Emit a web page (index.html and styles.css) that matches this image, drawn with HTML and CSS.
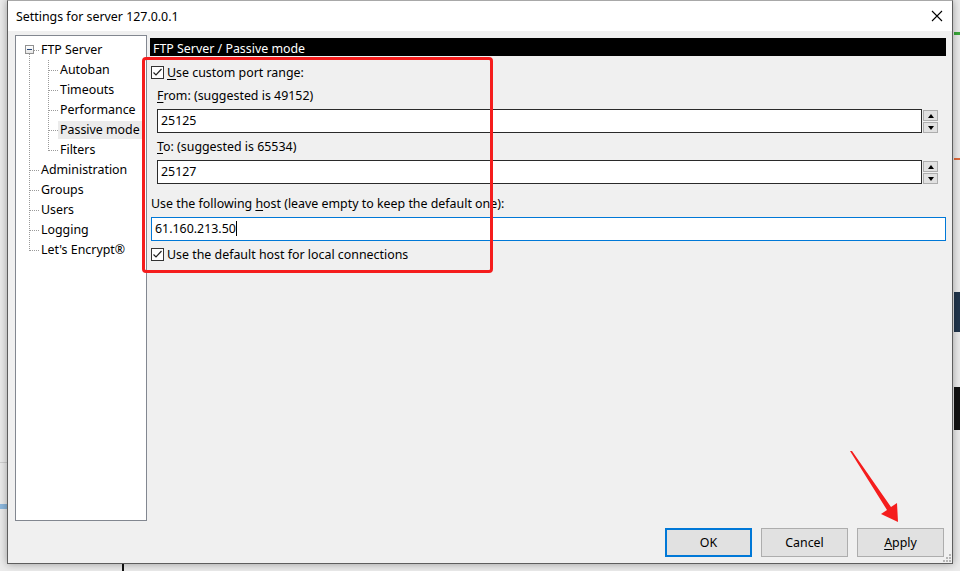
FILE: index.html
```
<!DOCTYPE html>
<html lang="en">
<head>
    <meta charset="UTF-8">
    <title>Settings for server 127.0.0.1</title>
    <link rel="stylesheet" href="styles.css">
</head>
<body>
    <!-- bits of the desktop behind the dialog -->
    <div class="desk">
        <span class="bit bit-line-left"></span>
        <span class="bit bit-blue-left"></span>
        <span class="bit bit-green-right"></span>
        <span class="bit bit-red-right"></span>
        <span class="bit bit-navy-right"></span>
        <span class="bit bit-black-right"></span>
        <span class="bit bit-bottom-line"></span>
    </div>

    <div class="window">
        <div class="titlebar">
            <span class="title">Settings for server 127.0.0.1</span>
            <svg class="close" width="12" height="12" viewBox="0 0 12 12">
                <path d="M1 1 L11 11 M11 1 L1 11" stroke="#000" stroke-width="1.1" fill="none"/>
            </svg>
        </div>

        <div class="content">
            <div class="tree">
                <ul class="tree-root">
                    <li>
                        <div class="tree-row first"><span class="expander"></span><span class="tree-label">FTP Server</span></div>
                        <ul class="tree-kids">
                            <li class="tree-row"><span class="tree-label">Autoban</span></li>
                            <li class="tree-row"><span class="tree-label">Timeouts</span></li>
                            <li class="tree-row"><span class="tree-label">Performance</span></li>
                            <li class="tree-row"><span class="tree-label selected">Passive mode</span></li>
                            <li class="tree-row"><span class="tree-label">Filters</span></li>
                        </ul>
                    </li>
                    <li class="tree-row"><span class="tree-label">Administration</span></li>
                    <li class="tree-row"><span class="tree-label">Groups</span></li>
                    <li class="tree-row"><span class="tree-label">Users</span></li>
                    <li class="tree-row"><span class="tree-label">Logging</span></li>
                    <li class="tree-row"><span class="tree-label">Let's Encrypt®</span></li>
                </ul>
            </div>

            <div class="page">
                <div class="page-title">FTP Server / Passive mode</div>

                <div class="check check-first">
                    <span class="box"><svg width="11" height="11" viewBox="0 0 11 11"><path d="M1.5 5.5 L4 8 L9.5 2" stroke="#222" stroke-width="1.2" fill="none"/></svg></span>
                    <span><u>U</u>se custom port range:</span>
                </div>

                <div class="label indent"><u>F</u>rom: (suggested is 49152)</div>
                <div class="spin-row">
                    <div class="field">25125</div>
                    <div class="spin">
                        <span class="spin-btn"><span class="tri-up"></span></span>
                        <span class="spin-btn"><span class="tri-down"></span></span>
                    </div>
                </div>

                <div class="label indent label-to"><u>T</u>o: (suggested is 65534)</div>
                <div class="spin-row">
                    <div class="field">25127</div>
                    <div class="spin">
                        <span class="spin-btn"><span class="tri-up"></span></span>
                        <span class="spin-btn"><span class="tri-down"></span></span>
                    </div>
                </div>

                <div class="label label-host">Use the following <u>h</u>ost (leave empty to keep the default one):</div>
                <div class="field field-host">61.160.213.50<span class="caret"></span></div>

                <div class="check check-local">
                    <span class="box"><svg width="11" height="11" viewBox="0 0 11 11"><path d="M1.5 5.5 L4 8 L9.5 2" stroke="#222" stroke-width="1.2" fill="none"/></svg></span>
                    <span>Use the default host for local connections</span>
                </div>
            </div>
        </div>

        <div class="footer">
            <button class="btn btn-default">OK</button>
            <button class="btn">Cancel</button>
            <button class="btn"><u>A</u>pply</button>
        </div>

        <svg class="grip" width="8" height="8" viewBox="0 0 8 8">
            <rect x="6" y="0" width="2" height="2" fill="#b5b5b5"/>
            <rect x="3" y="3" width="2" height="2" fill="#b5b5b5"/>
            <rect x="6" y="3" width="2" height="2" fill="#b5b5b5"/>
            <rect x="0" y="6" width="2" height="2" fill="#b5b5b5"/>
            <rect x="3" y="6" width="2" height="2" fill="#b5b5b5"/>
            <rect x="6" y="6" width="2" height="2" fill="#b5b5b5"/>
        </svg>
    </div>

    <!-- red annotations drawn over the screenshot -->
    <div class="callout"></div>
    <svg class="arrow" width="960" height="571" viewBox="0 0 960 571">
        <polygon points="850,451 852,451 891,507 897,503 898,522 881,514 887,510" fill="#f51d1d"/>
    </svg>
</body>
</html>
```

FILE: styles.css
```
* {
    margin: 0;
    padding: 0;
    box-sizing: border-box;
}

body {
    width: 960px;
    height: 571px;
    overflow: hidden;
    position: relative;
    background-color: #ebebeb;
    font-family: "Noto Sans", "Open Sans", sans-serif;
    font-size: 12.4px;
    color: #000;
}

u {
    text-decoration: underline;
    text-underline-offset: 2px;
}

/* desktop behind */
.bit {
    position: absolute;
    display: block;
}

.bit-line-left { left: 0; top: 462px; width: 7px; height: 1px; background-color: #cfcfcf; }
.bit-blue-left { left: 0; top: 504px; width: 7px; height: 5px; background-color: #8db8de; }
.bit-green-right { left: 954px; top: 32px; width: 6px; height: 3px; background-color: #3aa83a; }
.bit-red-right { left: 954px; top: 158px; width: 6px; height: 2px; background-color: #df6a3c; }
.bit-navy-right { left: 954px; top: 292px; width: 6px; height: 40px; background-color: #22364c; }
.bit-black-right { left: 954px; top: 387px; width: 6px; height: 43px; background-color: #101010; }
.bit-bottom-line { left: 122px; top: 563px; width: 2px; height: 8px; background-color: #111; }

/* dialog */
.window {
    position: relative;
    margin-left: 7px;
    width: 946px;
    height: 564px;
    background-color: #f0f0f0;
    border: 1px solid #5e5e5e;
    border-top-color: #a8a8a8;
    box-shadow: 0 0 8px rgba(0, 0, 0, 0.35);
    display: flex;
    flex-direction: column;
}

.titlebar {
    flex: none;
    height: 30px;
    background-color: #fff;
    display: flex;
    align-items: center;
    justify-content: space-between;
    padding: 0 9px 0 8px;
}

.content {
    flex: none;
    display: flex;
    gap: 3px;
    padding: 4px 6px 0 7px;
}

/* tree */
.tree {
    flex: none;
    width: 132px;
    height: 486px;
    background-color: #fff;
    border: 1px solid #828790;
    padding-top: 4px;
}

.tree ul {
    list-style: none;
}

.tree-root {
    position: relative;
}

.tree-root::before {
    content: "";
    position: absolute;
    left: 13px;
    top: 14px;
    height: 197px;
    border-left: 1px dotted #9a9a9a;
}

.tree-row {
    position: relative;
    height: 20px;
    line-height: 20px;
    padding-left: 23px;
    white-space: nowrap;
}

.tree-row::before {
    content: "";
    position: absolute;
    left: 14px;
    top: 10px;
    width: 9px;
    border-top: 1px dotted #9a9a9a;
}

.tree-row.first::before {
    left: 18px;
    width: 5px;
}

.expander {
    position: absolute;
    left: 9px;
    top: 5px;
    width: 9px;
    height: 9px;
    border: 1px solid #919191;
    background: linear-gradient(#fff, #e6e6e6);
    z-index: 1;
}

.expander::after {
    content: "";
    position: absolute;
    left: 1px;
    top: 3px;
    width: 5px;
    height: 1px;
    background-color: #26467a;
}

.tree-kids {
    position: relative;
}

.tree-kids::before {
    content: "";
    position: absolute;
    left: 32px;
    top: 0;
    height: 91px;
    border-left: 1px dotted #9a9a9a;
}

.tree-kids .tree-row {
    padding-left: 42px;
}

.tree-kids .tree-row::before {
    left: 33px;
    width: 9px;
}

.tree-label {
    display: inline-block;
    padding: 0 2px;
    line-height: 18px;
}

.tree-label.selected {
    background-color: #ebebeb;
}

/* right page */
.page {
    flex: 1;
    padding-top: 3px;
}

.page-title {
    height: 18px;
    line-height: 21px;
    overflow: hidden;
    background-color: #000;
    color: #fff;
    padding-left: 3px;
}

.check {
    display: flex;
    align-items: center;
    height: 18px;
    padding-left: 1px;
}

.check-first { margin-top: 7px; }
.check-local { margin-top: 4px; }

.box {
    width: 13px;
    height: 13px;
    border: 1px solid #333;
    background-color: #fff;
    margin-right: 3px;
    display: flex;
    align-items: center;
    justify-content: center;
}

.label {
    height: 18px;
    line-height: 20px;
    margin-top: 5px;
}

.indent { padding-left: 7px; }
.label-to { margin-top: 4px; }
.label-host { margin-top: 10px; padding-left: 1px; }

.spin-row {
    display: flex;
    margin-top: 5px;
    padding: 0 8px 0 7px;
}

.field {
    height: 24px;
    line-height: 22px;
    border: 1px solid #2a2a2a;
    background-color: #fff;
    padding-left: 3px;
}

.spin-row .field {
    flex: 1;
}

.spin {
    width: 15px;
    margin-left: 1px;
    padding-top: 1px;
    display: flex;
    flex-direction: column;
    gap: 1px;
}

.spin-btn {
    height: 11px;
    border: 1px solid #adadad;
    background-color: #e1e1e1;
    display: flex;
    align-items: center;
    justify-content: center;
}

.tri-up {
    border-left: 3.5px solid transparent;
    border-right: 3.5px solid transparent;
    border-bottom: 4px solid #000;
}

.tri-down {
    border-left: 3.5px solid transparent;
    border-right: 3.5px solid transparent;
    border-top: 4px solid #000;
}

.field-host {
    margin-top: 5px;
    margin-left: 1px;
    border-color: #0078d7;
}

.caret {
    display: inline-block;
    width: 1px;
    height: 15px;
    background-color: #000;
    vertical-align: -3px;
}

/* buttons */
.footer {
    flex: none;
    display: flex;
    justify-content: flex-end;
    gap: 9px;
    margin-top: 7px;
    padding-right: 8px;
}

.btn {
    width: 87px;
    height: 29px;
    background-color: #e1e1e1;
    border: 1px solid #adadad;
    font-family: inherit;
    font-size: 12.4px;
    color: #000;
}

.btn-default {
    border: 2px solid #0078d7;
}

.grip {
    position: absolute;
    right: 1px;
    bottom: 1px;
}

/* annotations */
.callout {
    position: absolute;
    left: 142px;
    top: 57px;
    width: 351px;
    height: 216px;
    border: 3px solid #f51d1d;
    border-radius: 4px;
}

.arrow {
    position: absolute;
    left: 0;
    top: 0;
    pointer-events: none;
}
```
